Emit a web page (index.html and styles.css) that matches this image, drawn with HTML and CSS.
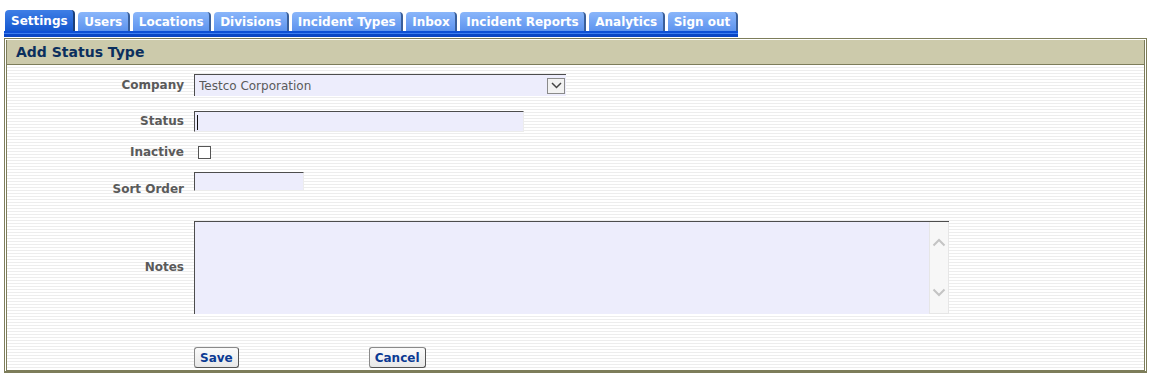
FILE: index.html
```html
<!DOCTYPE html>
<html>
  <head>
    <title>Add Status Type</title>
    <link rel="stylesheet" href="styles.css">
  </head>
  <body>
    <div class="tabs">
      <ul class="tab-list">
        <li class="tab active">Settings</li>
        <li class="tab">Users</li>
        <li class="tab">Locations</li>
        <li class="tab">Divisions</li>
        <li class="tab">Incident Types</li>
        <li class="tab">Inbox</li>
        <li class="tab">Incident Reports</li>
        <li class="tab">Analytics</li>
        <li class="tab">Sign out</li>
      </ul>
      <div class="tab-bar"></div>
    </div>

    <div class="panel">
      <div class="panel-title">Add Status Type</div>
      <div class="panel-body">
        <div class="row row-company">
          <label class="field-label">Company</label>
          <div class="select-box">
            <select class="select">
              <option>Testco Corporation</option>
            </select>
            <span class="select-arrow">
              <svg width="11" height="7" viewBox="0 0 11 7"><path d="M1 1 L5.5 5.5 L10 1" fill="none" stroke="#444" stroke-width="1.5"/></svg>
            </span>
          </div>
        </div>

        <div class="row row-status">
          <label class="field-label">Status</label>
          <input class="text-input status-input" type="text">
        </div>

        <div class="row row-inactive">
          <label class="field-label">Inactive</label>
          <input class="checkbox" type="checkbox">
        </div>

        <div class="row row-sort">
          <label class="field-label sort-label">Sort Order</label>
          <input class="text-input sort-input" type="text">
        </div>

        <div class="row row-notes">
          <label class="field-label">Notes</label>
          <div class="notes-box">
            <textarea class="notes"></textarea>
            <div class="scroll">
              <svg width="14" height="9" viewBox="0 0 14 9"><path d="M1.5 7.5 L7 2 L12.5 7.5" fill="none" stroke="#c4c4c4" stroke-width="2"/></svg>
              <svg width="14" height="9" viewBox="0 0 14 9"><path d="M1.5 1.5 L7 7 L12.5 1.5" fill="none" stroke="#c4c4c4" stroke-width="2"/></svg>
            </div>
          </div>
        </div>

        <div class="row row-buttons">
          <span></span>
          <div class="buttons">
            <button class="btn">Save</button>
            <button class="btn btn-cancel">Cancel</button>
          </div>
        </div>
      </div>
    </div>
  </body>
</html>
```

FILE: styles.css
```css
body {
  margin: 0;
  padding: 10px 5px 0 4px;
  font-family: "DejaVu Sans", Verdana, sans-serif;
  background-color: #fff;
}
.tabs {
  width: fit-content;
}
.tab-list {
  list-style: none;
  margin: 0;
  padding: 0 0 0 1px;
  display: flex;
  align-items: flex-end;
  gap: 3px;
}
.tab {
  height: 19px;
  line-height: 20px;
  padding: 0 5.5px 0 6px;
  font-size: 12px;
  font-weight: bold;
  color: #fff;
  background: linear-gradient(#8ab6fa, #5d93ee);
  border-radius: 4px 4px 0 0;
  border-right: 2px solid #3a5f9a;
  white-space: nowrap;
}
.tab.active {
  height: 21px;
  line-height: 23px;
  background: linear-gradient(#3f7fe6, #1457cf);
  border-right-color: #1a3f7a;
}
.tab-bar {
  height: 6px;
  background: linear-gradient(#0d4fd6 0, #0d4fd6 2px, #3c7df0 2px, #3c7df0 3px, #0a46c4 3px);
}
.panel {
  margin-top: 1px;
  border: 1px solid #7d7d5a;
  border-bottom-width: 2px;
  padding: 1px 1px 0 1px;
  background-color: #fff;
}
.panel-title {
  height: 24px;
  line-height: 25px;
  padding-left: 9px;
  background-color: #cccaab;
  border: 1px solid #7d7d5a;
  border-bottom: 0;
  border-top: 0;
  font-size: 14px;
  font-weight: bold;
  color: #0b2f5e;
}
.panel-body {
  border: 1px solid #7d7d5a;
  padding: 0 0 2px 0;
  background: repeating-linear-gradient(#fff 0, #fff 2px, #ededed 2px, #ededed 3px);
}
.row {
  display: grid;
  grid-template-columns: 177px auto;
  column-gap: 10px;
  align-items: center;
  justify-content: start;
}
.field-label {
  text-align: right;
  font-size: 12px;
  font-weight: bold;
  color: #5a5a5a;
  line-height: 15px;
}
.row-company {
  margin-top: 9px;
}
.row-status {
  margin-top: 15px;
}
.row-inactive {
  margin-top: 13px;
}
.row-sort {
  margin-top: 12px;
}
.row-notes {
  margin-top: 24px;
}
.row-buttons {
  margin-top: 33px;
}
.select-box {
  display: flex;
  align-items: center;
  width: 372px;
  height: 22px;
  box-sizing: border-box;
  background-color: #ededfc;
  border-top: 1px solid #4d4d4d;
  border-left: 1px solid #4d4d4d;
}
.select {
  appearance: none;
  -webkit-appearance: none;
  flex: 1;
  border: 0;
  background: transparent;
  font-family: "DejaVu Sans", Verdana, sans-serif;
  font-size: 12px;
  color: #5a5a5a;
  padding: 0 0 0 4px;
  outline: none;
}
.select-arrow {
  width: 18px;
  height: 16px;
  margin-right: 1px;
  box-sizing: border-box;
  border: 1px solid #8a8a8a;
  background-color: #f2f2f2;
  display: flex;
  align-items: center;
  justify-content: center;
}
.text-input {
  height: 21px;
  box-sizing: border-box;
  margin: 0;
  padding: 0 3px;
  background-color: #ededfc;
  border: 1px solid #ececec;
  border-top-color: #4d4d4d;
  border-left-color: #4d4d4d;
  font-family: "DejaVu Sans", Verdana, sans-serif;
  font-size: 12px;
  outline: none;
}
.status-input {
  width: 330px;
  /* focused caret */
  background: linear-gradient(#111, #111) 2px 3px / 1px 15px no-repeat, #ededfc;
}
.sort-input {
  width: 110px;
  height: 19px;
  align-self: start;
}
.sort-label {
  align-self: start;
  padding-top: 10px;
}
.checkbox {
  appearance: none;
  -webkit-appearance: none;
  width: 13px;
  height: 13px;
  margin: 0 0 0 4px;
  border: 1px solid #555;
  background-color: #fff;
}
.notes-box {
  display: flex;
  width: 755px;
  height: 93px;
  box-sizing: border-box;
  border-top: 1px solid #4d4d4d;
  border-left: 1px solid #4d4d4d;
}
.notes {
  flex: 1;
  border: 0;
  margin: 0;
  background-color: #ededfc;
  resize: none;
  outline: none;
}
.scroll {
  width: 18px;
  background-color: #f7f7f7;
  border: 1px solid #e6e6e6;
  border-top: 0;
  display: flex;
  flex-direction: column;
  justify-content: space-between;
  align-items: center;
  padding: 16px 0 16px;
}
.buttons {
  display: flex;
  gap: 130px;
}
.btn {
  height: 21px;
  padding: 0 5px;
  font-family: "DejaVu Sans", Verdana, sans-serif;
  font-size: 12px;
  font-weight: bold;
  color: #0b3a93;
  background: linear-gradient(#fbfbfb, #e8e8e8);
  border: 1px solid #8a8a8a;
  border-right-color: #555;
  border-bottom-color: #555;
  border-radius: 3px;
}
```
